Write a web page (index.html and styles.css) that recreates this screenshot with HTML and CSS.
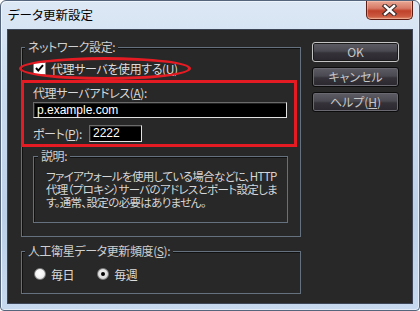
FILE: index.html
```html
<!DOCTYPE html>
<html lang="ja">
<head>
<meta charset="utf-8">
<title>データ更新設定</title>
<link rel="stylesheet" href="styles.css">
</head>
<body>
<div class="window">
  <div class="titlebar">
    <span class="title">データ更新設定</span>
    <span class="close">
      <svg width="17" height="12" viewBox="0 0 17 12">
        <path d="M4 2 L13 10 M13 2 L4 10" stroke="#3b2a28" stroke-width="4.5" stroke-linecap="square" fill="none"/>
        <path d="M4 2 L13 10 M13 2 L4 10" stroke="#ffffff" stroke-width="2.4" stroke-linecap="square" fill="none"/>
      </svg>
    </span>
  </div>
  <div class="client">
    <div class="left">
      <div class="group net">
        <span class="gtitle">ネットワーク設定:</span>
        <div class="check-row">
          <span class="checkbox">
            <svg width="13" height="13" viewBox="0 0 13 13">
              <rect x="0.5" y="0.5" width="12" height="12" fill="#ffffff" stroke="#8a8a8a"/>
              <path d="M3 6 L5.3 8.6 L10 3.2" stroke="#000" stroke-width="2" fill="none"/>
            </svg>
          </span>
          <span class="txt">代理サーバを使用する(<u>U</u>)</span>
          <span class="ellipse"></span>
        </div>
        <div class="redbox">
          <div class="lbl">代理サーバアドレス(<u>A</u>):</div>
          <div class="input addr">p.example.com</div>
          <div class="port-row">
            <span class="lbl port-lbl">ポート(<u>P</u>):</span>
            <span class="input port">2222</span>
          </div>
        </div>
        <div class="group desc">
          <span class="gtitle">説明:</span>
          <div class="desc-text">
            <div class="line">ファイアウォールを使用している場合などに、HTTP</div>
            <div class="line">代理（プロキシ）サーバのアドレスとポート設定しま</div>
            <div class="line">す。通常、設定の必要はありません。</div>
          </div>
        </div>
      </div>
      <div class="group freq">
        <span class="gtitle">人工衛星データ更新頻度(<u>S</u>):</span>
        <div class="radio-row">
          <span class="opt"><span class="radio"></span><span class="txt">毎日</span></span>
          <span class="opt second"><span class="radio on"></span><span class="txt">毎週</span></span>
        </div>
      </div>
    </div>
    <div class="buttons">
      <div class="btn default">OK</div>
      <div class="btn">キャンセル</div>
      <div class="btn">ヘルプ(<u>H</u>)</div>
    </div>
  </div>
</div>
</body>
</html>
```
FILE: styles.css
```css
* { box-sizing: border-box; }
html, body { margin: 0; padding: 0; }
body {
  width: 420px;
  height: 311px;
  overflow: hidden;
  background: #ffffff;
  font-family: "Noto Sans CJK JP", "Noto Sans", sans-serif;
  font-size: 12px;
  font-feature-settings: "palt";
  letter-spacing: -0.4px;
}
u { text-decoration: underline; text-underline-offset: 1px; }

.window {
  width: 420px;
  height: 311px;
  border: 1px solid #55667c;
  border-radius: 6px 6px 4px 4px;
  padding: 0 6px 6px 6px;
  background: linear-gradient(180deg, #dde8f5 0%, #c9dbee 30%, #bcd0e8 70%, #c6d9ee 100%);
  box-shadow: inset 1px 1px 0 #eef4fb, inset -1px -1px 0 #e4edf7;
}

.titlebar {
  height: 28px;
  display: flex;
  align-items: flex-start;
}
.title {
  padding-left: 1px;
  margin-top: 5px;
  line-height: 18px;
  font-size: 12.5px;
  letter-spacing: 0;
  color: #000;
}
.close {
  margin-left: auto;
  width: 47px;
  height: 19px;
  border: 1px solid #5b1d14;
  border-top: none;
  border-radius: 0 0 5px 5px;
  background: linear-gradient(180deg, #e9a896 0%, #d77a66 40%, #c0412b 55%, #cb5a40 85%, #df8c6e 100%);
  box-shadow: inset 0 0 0 1px rgba(255, 210, 190, 0.45);
  display: flex;
  align-items: center;
  justify-content: center;
}
.close svg { display: block; }

.client {
  width: 406px;
  height: 275px;
  background: #282828;
  border: 1px solid #3d4656;
  display: flex;
  padding: 12px 0 0 13px;
  color: #d6d6d6;
}

.left {
  width: 280px;
  padding-top: 5px;
}

.group {
  position: relative;
  border: 1px solid #66717f;
  box-shadow: inset 1px 1px 0 #111;
}
.gtitle {
  position: absolute;
  top: -8px;
  left: 3px;
  padding: 0 3px;
  line-height: 14px;
  background: #282828;
  color: #cfcfcf;
  white-space: nowrap;
}

.net {
  width: 280px;
  height: 190px;
}

.check-row {
  position: relative;
  margin-top: 14px;
  padding-left: 11px;
  height: 13px;
  display: flex;
  align-items: center;
  gap: 5px;
}
.checkbox { display: block; width: 13px; height: 13px; }
.checkbox svg { display: block; }
.check-row .txt { line-height: 13px; color: #dcdcdc; }
.ellipse {
  position: absolute;
  left: -3px;
  top: -5px;
  width: 172px;
  height: 23px;
  border: 3px solid #e41b23;
  border-radius: 50%;
}

.redbox {
  margin: 5px 0 0 -1px;
  width: 276px;
  height: 67px;
  border: 3px solid #e41b23;
  padding: 3px 0 0 9px;
}
.lbl { line-height: 13px; color: #d8d8d8; white-space: nowrap; }
.input {
  display: block;
  background: #000;
  color: #fff;
  border-top: 1px solid #6b6b6b;
  border-left: 1px solid #6b6b6b;
  border-right: 1px solid #e2e2e2;
  border-bottom: 1px solid #e2e2e2;
  box-shadow: inset 1px 1px 0 #222;
  padding-left: 3px;
  line-height: 14px;
  font-family: "Liberation Sans", "Noto Sans", sans-serif;
  font-size: 12px;
  letter-spacing: 0;
}
.addr {
  margin-top: 3px;
  width: 254px;
  height: 16px;
}
.port-row {
  margin-top: 7px;
  display: flex;
  align-items: center;
  height: 17px;
}
.port-lbl { width: 56px; }
.port {
  width: 53px;
  height: 17px;
  line-height: 15px;
}

.desc {
  margin: 9px 0 0 11px;
  width: 255px;
  height: 67px;
}
.desc .gtitle { left: 4px; }
.desc-text {
  padding: 13px 0 0 12px;
  color: #d6d6d6;
  white-space: nowrap;
  font-size: 11.5px;
  letter-spacing: -0.65px;
}
.desc-text .line { height: 13px; line-height: 13px; }

.freq {
  margin-top: 14px;
  width: 280px;
  height: 43px;
}
.radio-row {
  margin-top: 16px;
  padding-left: 12px;
  display: flex;
  align-items: center;
  height: 12px;
}
.opt { display: flex; align-items: center; gap: 5px; }
.opt.second { margin-left: 23px; }
.radio {
  display: block;
  width: 12px;
  height: 12px;
  border-radius: 50%;
  border: 1px solid #7d7d7d;
  background: radial-gradient(circle at 45% 40%, #ffffff 0%, #f4f4f4 50%, #cfcfcf 100%);
  position: relative;
}
.radio.on {
  background: radial-gradient(circle at 45% 40%, #f0f0f0 0%, #dcdcdc 60%, #bdbdbd 100%);
}
.radio.on::after {
  content: "";
  position: absolute;
  left: 3px;
  top: 3px;
  width: 4px;
  height: 4px;
  border-radius: 50%;
  background: #000;
}
.opt .txt { line-height: 13px; color: #dcdcdc; }

.buttons {
  margin-left: 11px;
  width: 87px;
  display: flex;
  flex-direction: column;
  gap: 5px;
}
.btn {
  height: 20px;
  border: 1px solid #0c0c0c;
  border-radius: 3px;
  background: linear-gradient(180deg, #5e5c64 0%, #4a4850 45%, #353339 55%, #2a282e 100%);
  box-shadow: inset 0 0 0 1px #6a6870;
  color: #c6c6c6;
  text-align: center;
  line-height: 18px;
  white-space: nowrap;
  letter-spacing: 0;
}
.btn.default {
  border: 1px solid #c4c4c4;
  box-shadow: inset 0 0 0 1px #1a1a1a;
}
```
